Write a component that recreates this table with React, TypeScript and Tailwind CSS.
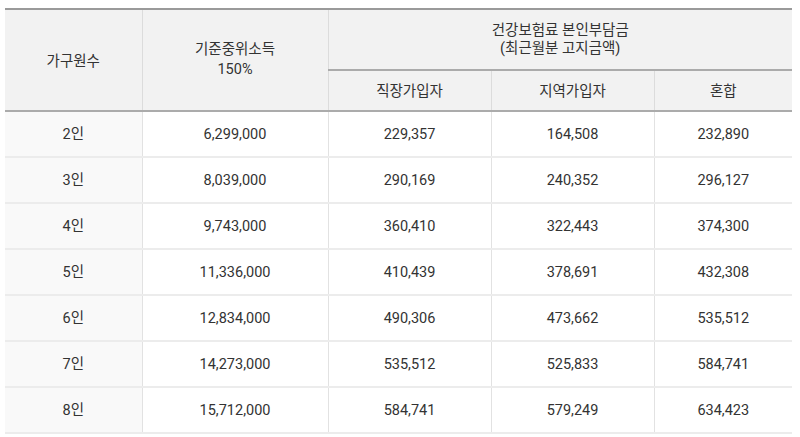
const rows = [
  ['2인', '6,299,000', '229,357', '164,508', '232,890'],
  ['3인', '8,039,000', '290,169', '240,352', '296,127'],
  ['4인', '9,743,000', '360,410', '322,443', '374,300'],
  ['5인', '11,336,000', '410,439', '378,691', '432,308'],
  ['6인', '12,834,000', '490,306', '473,662', '535,512'],
  ['7인', '14,273,000', '535,512', '525,833', '584,741'],
  ['8인', '15,712,000', '584,741', '579,249', '634,423'],
]

export default function App() {
  return (
    <div className="w-[800px] h-[437px] bg-white pt-2 pl-[5px] font-['Roboto','Noto_Sans_CJK_KR',sans-serif] text-[14.5px] text-[#333]">
      <table className="w-[787px] table-fixed border-collapse border-t-2 border-t-[#9a9a9a] text-center">
        <colgroup>
          <col className="w-[137px]" />
          <col className="w-[186px]" />
          <col className="w-[163px]" />
          <col className="w-[163px]" />
          <col className="w-[138px]" />
        </colgroup>
        <thead>
          <tr className="h-[61px] bg-[#f2f2f2]">
            <th rowSpan={2} className="font-normal border-r border-r-[#dcdcdc] border-b-2 border-b-[#ababab] leading-[20px] pt-1">
              가구원수
            </th>
            <th rowSpan={2} className="font-normal border-r border-r-[#dcdcdc] border-b-2 border-b-[#ababab] leading-[20px]">
              기준중위소득
              <br />
              150%
            </th>
            <th colSpan={3} className="font-normal border-b-2 border-b-[#ababab] leading-[18px]">
              건강보험료 본인부담금
              <br />
              (최근월분 고지금액)
            </th>
          </tr>
          <tr className="h-[41px] bg-[#f2f2f2]">
            <th className="font-normal border-r border-r-[#dcdcdc] border-b-2 border-b-[#ababab] pt-0.5">직장가입자</th>
            <th className="font-normal border-r border-r-[#dcdcdc] border-b-2 border-b-[#ababab] pt-0.5">지역가입자</th>
            <th className="font-normal border-b-2 border-b-[#ababab] pt-0.5">혼합</th>
          </tr>
        </thead>
        <tbody>
          {rows.map((r) => (
            <tr key={r[0]} className="h-[46px] border-b-2 border-b-[#ececec]">
              <td className="bg-[#f9f9f9] border-r border-r-[#e2e2e2] pt-0.5">{r[0]}</td>
              <td className="border-r border-r-[#e2e2e2] pt-0.5">{r[1]}</td>
              <td className="border-r border-r-[#e2e2e2] pt-0.5">{r[2]}</td>
              <td className="border-r border-r-[#e2e2e2] pt-0.5">{r[3]}</td>
              <td className="pt-0.5">{r[4]}</td>
            </tr>
          ))}
        </tbody>
      </table>
    </div>
  )
}
